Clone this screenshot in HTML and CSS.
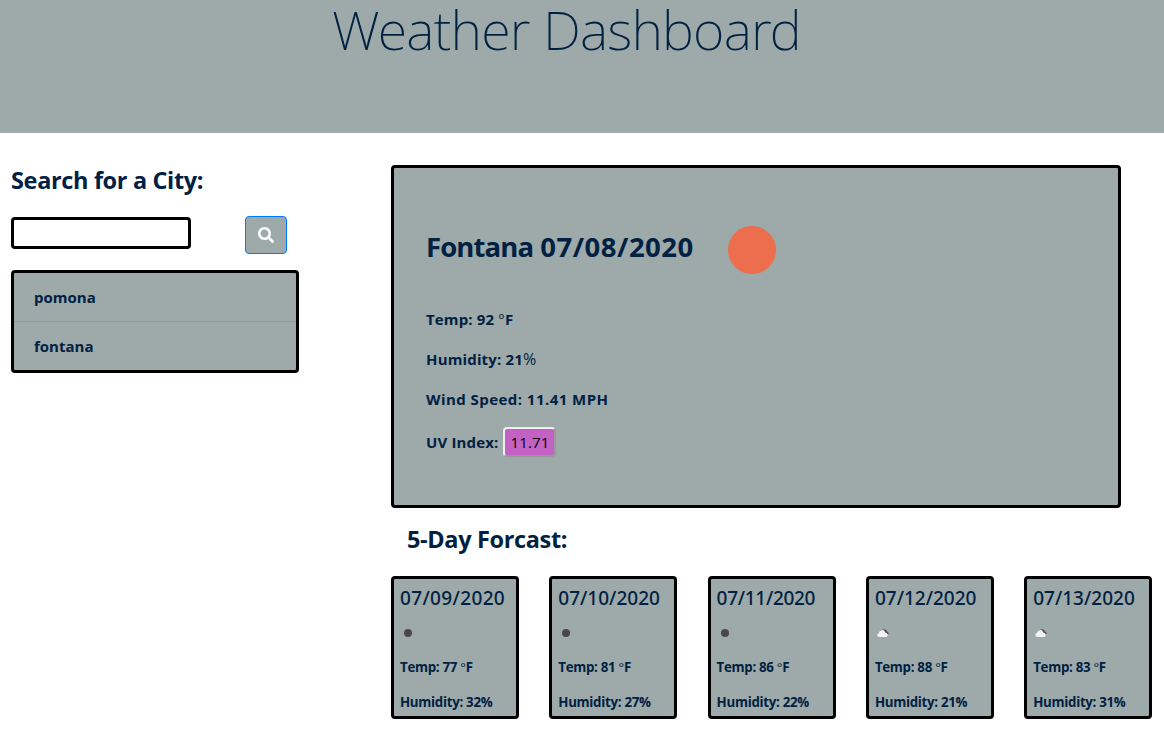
FILE: index.html
```html
<!DOCTYPE html>
<html lang="en">
<head>
<meta charset="utf-8">
<title>Weather Dashboard</title>
<link rel="stylesheet" href="styles.css">
</head>
<body>
<header class="banner"><h1 class="title">Weather Dashboard</h1></header>
<main class="layout">
  <aside class="sidebar">
    <h2 class="section-title search-title">Search for a City:</h2>
    <form class="search">
      <input class="search-input" type="text" aria-label="City">
      <button class="search-button" type="button" aria-label="Search">
        <svg width="16" height="16" viewBox="0 0 512 512" fill="#fff"><path d="M505 442.700L405.300 343c-4.500-4.500-10.600-7-17-7H372c27.600-35.300 44-79.700 44-128C416 93.100 322.900 0 208 0S0 93.100 0 208s93.100 208 208 208c48.300 0 92.700-16.400 128-44v16.300c0 6.400 2.500 12.500 7 17l99.700 99.700c9.400 9.400 24.600 9.400 33.900 0l28.300-28.300c9.400-9.400 9.400-24.600.1-34zM208 336c-70.700 0-128-57.200-128-128 0-70.700 57.200-128 128-128 70.700 0 128 57.200 128 128 0 70.700-57.200 128-128 128z"/></svg>
      </button>
    </form>
    <ul class="history">
      <li class="history-item">pomona</li>
      <li class="history-item">fontana</li>
    </ul>
  </aside>
  <section class="content">
    <article class="current">
      <div class="current-head">
        <h2 class="current-title"><span class="city">Fontana</span> <span class="today">07/08/2020</span></h2>
        <span class="sun"></span>
      </div>
      <p class="reading temp">Temp: 92 <span class="light">°</span>F</p>
      <p class="reading humidity">Humidity: 21<span class="light percent">%</span></p>
      <p class="reading wind">Wind Speed: 11.41 MPH</p>
      <p class="reading uv">UV Index: <span class="uv-badge">11.71</span></p>
    </article>
    <h2 class="section-title forecast-title">5-Day Forcast:</h2>
    <div class="forecast">
      <article class="day"><h3 class="date">07/09/2020</h3><div class="icon"><span class="moon"></span></div><p class="day-text">Temp: 77 <span class="light">°</span>F</p><p class="day-text">Humidity: 32%</p></article>
      <article class="day"><h3 class="date one">07/10/2020</h3><div class="icon"><span class="moon"></span></div><p class="day-text">Temp: 81 <span class="light">°</span>F</p><p class="day-text">Humidity: 27%</p></article>
      <article class="day"><h3 class="date two">07/11/2020</h3><div class="icon"><span class="moon"></span></div><p class="day-text">Temp: 86 <span class="light">°</span>F</p><p class="day-text">Humidity: 22%</p></article>
      <article class="day"><h3 class="date one">07/12/2020</h3><div class="icon"><svg class="cloud" width="12" height="8" viewBox="0 0 12 8"><path d="M5 1.500Q6-.2 8 .5q1.700.6 1.800 2Q12 3 11.500 5L10 5.500z" fill="#48484a"/><path d="M2 8Q.2 7.700.2 6 .4 4.300 2 4q.3-2.200 2.100-2.200Q6 .1 7.700 2q.4 1 .5 1.600Q10.900 4 10.700 6.300 10.500 7.800 9.400 8z" fill="#f2f2f2"/></svg></div><p class="day-text">Temp: 88 <span class="light">°</span>F</p><p class="day-text">Humidity: 21%</p></article>
      <article class="day"><h3 class="date one">07/13/2020</h3><div class="icon"><svg class="cloud" width="12" height="8" viewBox="0 0 12 8"><path d="M5 1.500Q6-.2 8 .5q1.700.6 1.800 2Q12 3 11.500 5L10 5.500z" fill="#48484a"/><path d="M2 8Q.2 7.700.2 6 .4 4.300 2 4q.3-2.200 2.100-2.200Q6 .1 7.700 2q.4 1 .5 1.600Q10.900 4 10.700 6.300 10.500 7.800 9.400 8z" fill="#f2f2f2"/></svg></div><p class="day-text">Temp: 83 <span class="light">°</span>F</p><p class="day-text">Humidity: 31%</p></article>
    </div>
  </section>
</main>
</body>
</html>
```
FILE: styles.css
```css
* { box-sizing: border-box; }
body { margin: 0; height: 739px; overflow: hidden; background: #fff; color: #002142; font-family: "Open Sans", "Noto Sans", sans-serif; }
h1, h2, h3, p, ul { margin: 0; padding: 0; white-space: nowrap; }
.banner { height: 133px; background: #9ea9a9; padding-left: 332px; }
.title { font-family: "Noto Sans", "Open Sans", sans-serif; font-size: 54px; font-weight: 250; line-height: 59px; letter-spacing: -.8px; }
.layout { display: grid; grid-template-columns: 380px 1fr; padding: 32px 0 0 11px; }
.section-title { font-size: 23.500px; font-weight: 700; line-height: 30px; letter-spacing: -.35px; }
.search { display: flex; align-items: flex-start; margin-top: 21px; gap: 54px; }
.search-input { width: 180px; height: 32px; margin-top: 1px; border: 3px solid #000; border-radius: 4px; background: #fff; padding: 1px 2px; }
.search-button { display: flex; align-items: center; justify-content: center; width: 42px; height: 38px; padding: 0; border: 1px solid #007bff; border-radius: 4px; background: #9ea9a9; }
.history { list-style: none; width: 288px; height: 103px; margin-top: 16px; border: 3px solid #000; border-radius: 4px; background: #9ea9a9; }
.history-item { height: 49px; padding-left: 20px; line-height: 49px; font-size: 15px; font-weight: 700; }
.history-item:first-child { border-bottom: 1px solid #8a9698; }
.current { width: 730px; height: 343px; border: 3px solid #000; border-radius: 4px; background: #9ea9a9; padding: 54px 32px 0; }
.current-head { display: flex; align-items: center; height: 56px; gap: 35px; }
.current-title { font-size: 27.500px; line-height: 40px; width: 267px; padding-bottom: 6px; }
.city { letter-spacing: -.9px; }
.today { letter-spacing: .5px; }
.sun { width: 48px; height: 48px; border-radius: 50%; background: #ec6e4c; }
.reading { height: 40px; line-height: 24px; font-size: 15px; font-weight: 700; letter-spacing: .15px; }
.temp { margin-top: 29px; }
.wind { letter-spacing: .45px; }
.light { font-weight: 400; }
.percent { font-size: 16px; }
.uv { display: flex; align-items: center; gap: 5px; height: 30px; }
.uv-badge { width: 53px; height: 30px; margin-top: -1px; border: 2px solid; border-color: #efefef #999 #999 #efefef; border-radius: 4px; background: #c461c4; color: #000; line-height: 26px; text-align: center; font-weight: 400; }
.forecast-title { margin: 16px 0 0 16px; }
.forecast { display: grid; grid-template-columns: repeat(5, 128px); column-gap: 30.300px; margin-top: 22px; }
.day { height: 143px; border: 3px solid #000; border-radius: 4px; background: #9ea9a9; padding: 7px 0 0 6px; }
.date { font-family: "Noto Sans", "Open Sans", sans-serif; font-size: 19px; font-weight: 500; line-height: 24px; letter-spacing: .35px; }
.one { letter-spacing: 0; }
.two { letter-spacing: -.3px; }
.icon { display: flex; align-items: center; height: 45px; padding-left: 4px; }
.moon { width: 8px; height: 8px; border-radius: 50%; background: #48484a; }
.cloud { margin-left: -2px; }
.day-text { height: 35px; line-height: 24px; font-size: 13.300px; font-weight: 700; letter-spacing: -.3px; }
```
